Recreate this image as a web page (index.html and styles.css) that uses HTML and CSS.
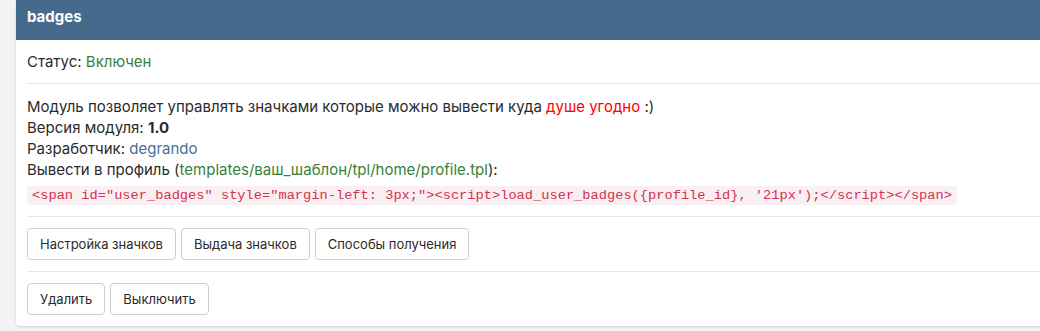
FILE: index.html
```html
<!DOCTYPE html>
<html lang="ru">
<head>
<meta charset="utf-8">
<link rel="stylesheet" href="styles.css">
</head>
<body>
<div class="card">
  <div class="card-header">badges</div>
  <div class="card-body">
    <div class="section status">Статус: <span class="green">Включен</span></div>
    <div class="section info">
      <div>Модуль позволяет управлять значками которые можно вывести куда <span class="red">душе угодно</span> :)</div>
      <div>Версия модуля: <b>1.0</b></div>
      <div>Разработчик: <span class="link">degrando</span></div>
      <div>Вывести в профиль (<span class="green">templates/ваш_шаблон/tpl/home/profile.tpl</span>):</div>
      <div class="code-line"><code>&lt;span id="user_badges" style="margin-left: 3px;"&gt;&lt;script&gt;load_user_badges({profile_id}, '21px');&lt;/script&gt;&lt;/span&gt;</code></div>
    </div>
    <div class="section buttons">
      <button class="btn">Настройка значков</button>
      <button class="btn">Выдача значков</button>
      <button class="btn">Способы получения</button>
    </div>
    <div class="section buttons last">
      <button class="btn">Удалить</button>
      <button class="btn">Выключить</button>
    </div>
  </div>
</div>
</body>
</html>
```
FILE: styles.css
```css
html, body {
  margin: 0;
  padding: 0;
  overflow: hidden;
  background: #f4f4f5;
}
body {
  font-family: Inter, "Noto Sans", sans-serif;
  font-size: 15px;
  color: #2b2b2b;
  padding: 0 0 6px 16px;
}
.card {
  width: 1100px;
  background: #fff;
  border-radius: 0 0 4px 4px;
  box-shadow: 0 1px 3px rgba(0,0,0,0.15);
}
.card-header {
  background: #466a8b;
  color: #fff;
  font-weight: 700;
  font-size: 15px;
  line-height: 20px;
  padding: 7px 11px 13px;
}
.card-body {
  padding: 0 0 0 11px;
}
.section {
  border-bottom: 1px solid #e8e8e8;
}
.section.last {
  border-bottom: none;
}
.status {
  line-height: 21px;
  padding: 11px 0 11px;
}
.info {
  line-height: 21px;
  padding: 12px 0 10px;
}
.green { color: #3a7f3a; }
.red { color: #ff0000; }
.link { color: #43709a; }
b { font-weight: 700; }
.code-line {
  margin-top: 3px;
}
code {
  font-family: "Liberation Mono", monospace;
  font-size: 13.7px;
  color: #d6304f;
  background: #f8f0f3;
  border-radius: 4px;
  padding: 2px 5px;
}
.buttons {
  display: flex;
  gap: 5px;
  padding: 11px 0 11px;
}
.btn {
  font-family: Inter, "Noto Sans", sans-serif;
  font-size: 13px;
  color: #2b2b2b;
  background: #fff;
  border: 1px solid #cfcfcf;
  border-radius: 4px;
  padding: 0 12px;
  height: 32px;
}
```
